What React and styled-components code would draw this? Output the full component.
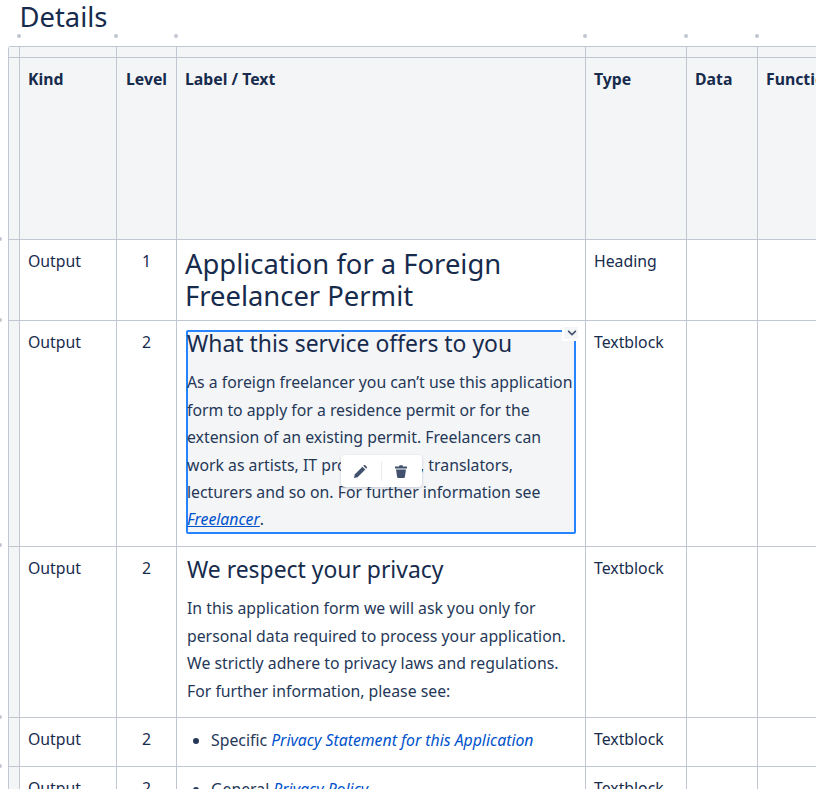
import React from 'react'
import styled, { createGlobalStyle } from 'styled-components'
import { FaChevronDown } from 'react-icons/fa'

const GlobalStyle = createGlobalStyle`
	html, body {
		margin: 0;
		height: 100%;
		overflow: hidden;
		background: #fff;
		color: #172b4d;
		font-family: "Noto Sans", "Open Sans", sans-serif;
		font-size: 15.8px;
	}
`

const columns = [11, 97, 60, 409, 101, 71, 200]

const Page = styled.div`
	position: relative;
	width: 816px;
	height: 789px;
	overflow: hidden;
`

const Title = styled.h2`
	margin: 0;
	padding: 0 0 0 19.5px;
	height: 46px;
	font-size: 27.4px;
	line-height: 33px;
	font-weight: 400;
	color: #172b4d;
`

const TableFrame = styled.div`
	position: relative;
	margin-left: 8px;
	width: 900px;
	border-top: 1px solid #c1c7d0;
	border-left: 1px solid #c1c7d0;
	border-top-left-radius: 3px;
`

const Dot = styled.span`
	position: absolute;
	width: 4px;
	height: 4px;
	border-radius: 50%;
	background: #c1c7d0;
`

const Table = styled.table`
	border-collapse: separate;
	border-spacing: 0;
	table-layout: fixed;
	width: ${columns.reduce((a, b) => a + b, 0)}px;
`

const Cell = styled.td`
	box-sizing: border-box;
	padding: 8px;
	height: ${p => p.$height}px;
	vertical-align: top;
	border-right: 1px solid #c1c7d0;
	border-bottom: 1px solid #c1c7d0;
	line-height: 27px;
	text-align: ${p => (p.$center ? 'center' : 'left')};
`

const HeadCell = styled(Cell).attrs({ as: 'th' })`
	background: #f4f5f7;
	font-weight: 700;
	color: #172b4d;
	white-space: nowrap;
	overflow: hidden;
`

const Gutter = styled.td`
	padding: 0;
	background: #f4f5f7;
	border-right: 1px solid #c1c7d0;
	border-bottom: 1px solid #c1c7d0;
`

const ControlCell = styled.td`
	box-sizing: border-box;
	padding: 0;
	height: 11px;
	background: #f4f5f7;
	border-right: 1px solid #c1c7d0;
	border-bottom: 1px solid #c1c7d0;
`

const Heading = styled.h1`
	margin: 0;
	font-size: 27.4px;
	line-height: 32px;
	font-weight: 400;
	color: #172b4d;
`

const Block = styled.div`
	position: relative;
	margin: 1px 1px 0;
	padding: 0 1px;
	${p => p.$selected && `
		box-shadow: inset 0 0 0 2px #2684ff;
		border-radius: 2px;
		background: #f4f5f7;
	`}
`

const BlockTitle = styled.h3`
	margin: 0 0 11.4px;
	font-size: 22.9px;
	line-height: 28px;
	font-weight: 400;
	color: #172b4d;
`

const Text = styled.p`
	margin: 0;
	line-height: 27.4px;
	color: #253858;
`

const Link = styled.a`
	color: #0052cc;
	font-style: italic;
	text-decoration: ${p => (p.$underline ? 'underline' : 'none')};
`

const BulletList = styled.ul`
	margin: 0;
	padding-left: 24px;
	line-height: 27.4px;
	color: #253858;
`

const Toolbar = styled.div`
	position: absolute;
	left: 155px;
	top: 125px;
	display: flex;
	align-items: center;
	box-sizing: border-box;
	width: 81px;
	height: 32px;
	padding-right: 1px;
	background: #fff;
	border-radius: 4px;
	box-shadow: 0 1px 3px rgba(9, 30, 66, 0.2);
`

const ToolButton = styled.span`
	flex: 1;
	display: flex;
	align-items: center;
	justify-content: center;
	height: 20px;
	color: #42526e;
	& + & {
		border-left: 1px solid #ebecf0;
	}
`

const Chevron = styled.span`
	position: absolute;
	right: -4px;
	top: -5px;
	display: flex;
	align-items: center;
	justify-content: center;
	width: 18px;
	height: 16px;
	padding-left: 1px;
	background: #f4f5f7;
	border: 2px solid #fff;
	box-sizing: border-box;
	color: #42526e;
	font-size: 10px;
`

function PencilIcon() {
	return (
		<svg width="13" height="13" viewBox="0 0 13 13" fill="currentColor">
			<path d="M0 13 L.7 9.4 L8.4 1.7 L11.3 4.6 L3.6 12.3 Z" />
			<path d="M9.3 .8 L9.9 .3 a1 1 0 0 1 1.4 0 L12.7 1.7 a1 1 0 0 1 0 1.4 L12.2 3.7 Z" />
		</svg>
	)
}

function TrashIcon() {
	return (
		<svg width="12" height="13" viewBox="0 0 12 13" fill="currentColor">
			<path d="M4 1.6 L4.6 .3 h2.8 L8 1.6 H12 V3.4 H0 V1.6 Z" />
			<path d="M1 4.6 h10 L9.8 12.2 a1 1 0 0 1 -1 .8 H3.2 a1 1 0 0 1 -1 -.8 Z" />
		</svg>
	)
}

const dotOffsets = [10, 107, 167, 576, 677, 748]
const rowDots = [192, 273, 498, 670, 719]

const rows = [
	{ level: 1, type: 'Heading', height: 81, label: <Heading>Application for a Foreign Freelancer Permit</Heading> },
	{
		level: 2,
		type: 'Textblock',
		height: 226,
		label: (
			<Block $selected>
				<BlockTitle>What this service offers to you</BlockTitle>
				<Text>
					As a foreign freelancer you can’t use this application form to apply for a residence permit or for the extension of an existing permit. Freelancers can work as artists, IT professionals, translators, lecturers and so on. For further information see <Link $underline>Freelancer</Link>.
				</Text>
				<Toolbar>
					<ToolButton><PencilIcon /></ToolButton>
					<ToolButton><TrashIcon /></ToolButton>
				</Toolbar>
				<Chevron><FaChevronDown /></Chevron>
			</Block>
		),
	},
	{
		level: 2,
		type: 'Textblock',
		height: 171,
		label: (
			<Block>
				<BlockTitle>We respect your privacy</BlockTitle>
				<Text>
					In this application form we will ask you only for personal data required to process your application. We strictly adhere to privacy laws and regulations. For further information, please see:
				</Text>
			</Block>
		),
	},
	{
		level: 2,
		type: 'Textblock',
		height: 49,
		label: (
			<Block>
				<BulletList><li>Specific <Link>Privacy Statement for this Application</Link></li></BulletList>
			</Block>
		),
	},
	{
		level: 2,
		type: 'Textblock',
		height: 49,
		label: (
			<Block>
				<BulletList><li>General <Link>Privacy Policy</Link></li></BulletList>
			</Block>
		),
	},
]

const headers = ['Kind', 'Level', 'Label / Text', 'Type', 'Data', 'Function']

export default function App() {
	return (
		<Page>
			<GlobalStyle />
			<Title>Details</Title>
			<TableFrame>
				{dotOffsets.map(x => <Dot key={x} style={{ left: x - 2, top: -13 }} />)}
				{rowDots.map(y => <Dot key={y} style={{ left: -11, top: y - 2 }} />)}
				<Table>
					<colgroup>
						{columns.map((w, i) => <col key={i} style={{ width: w }} />)}
					</colgroup>
					<thead>
						<tr>
							{columns.map((w, i) => <ControlCell key={i} />)}
						</tr>
						<tr>
							<Gutter />
							{headers.map(h => <HeadCell key={h} $height={182} $center={h === 'Level'}>{h}</HeadCell>)}
						</tr>
					</thead>
					<tbody>
						{rows.map((row, i) => (
							<tr key={i}>
								<Gutter />
								<Cell $height={row.height}>Output</Cell>
								<Cell $height={row.height} $center>{row.level}</Cell>
								<Cell $height={row.height}>{row.label}</Cell>
								<Cell $height={row.height}>{row.type}</Cell>
								<Cell $height={row.height} />
								<Cell $height={row.height} />
							</tr>
						))}
					</tbody>
				</Table>
			</TableFrame>
		</Page>
	)
}
